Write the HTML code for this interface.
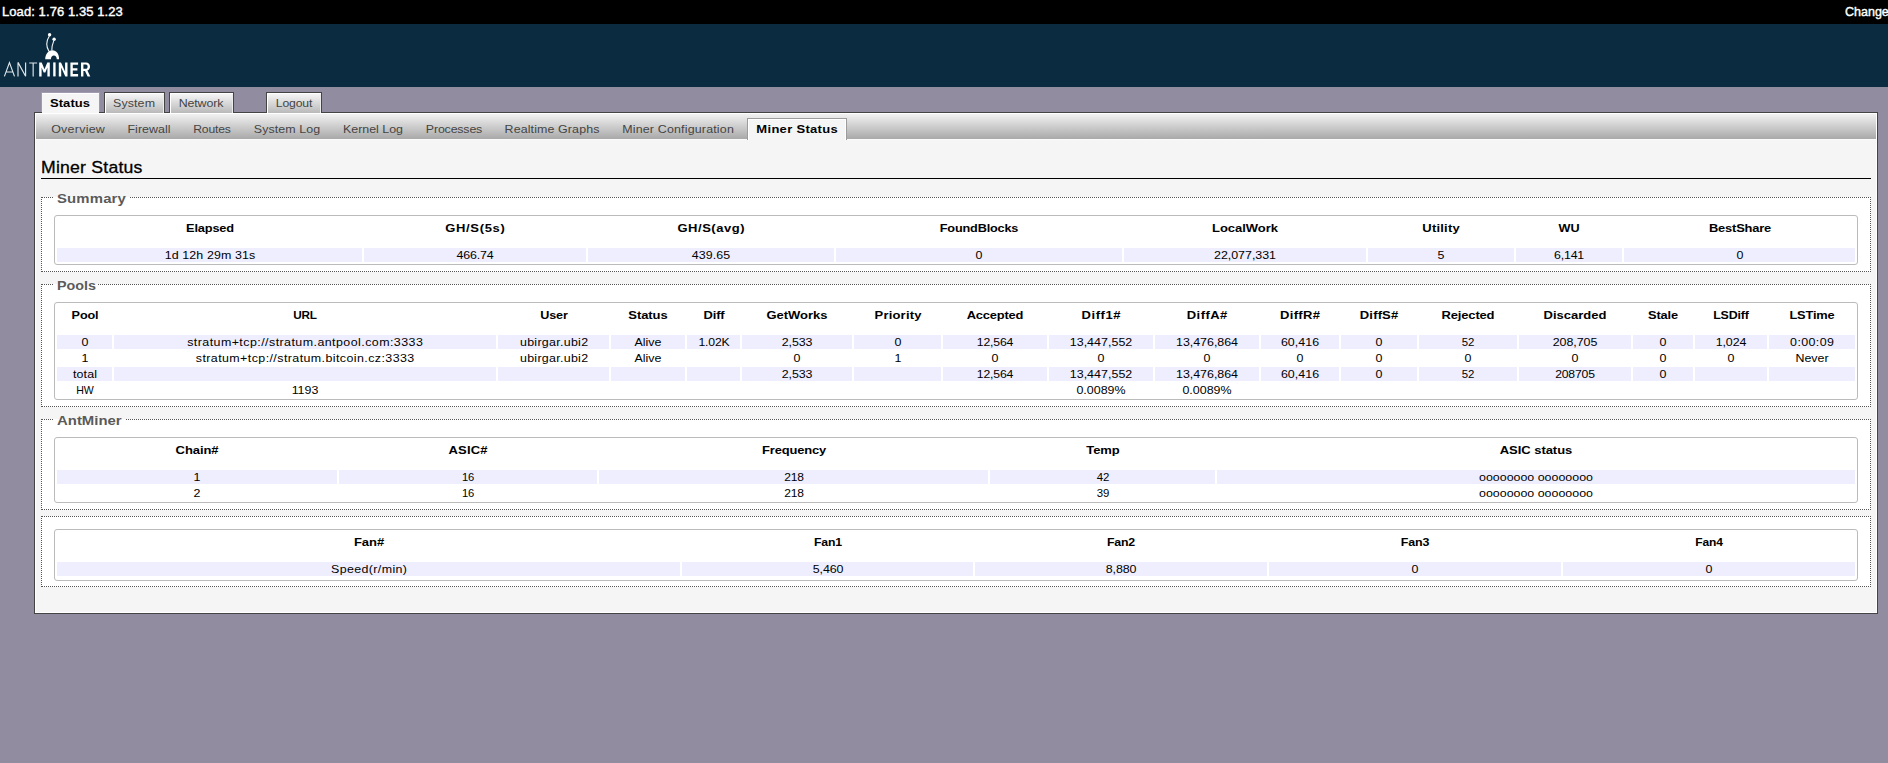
<!DOCTYPE html>
<html><head><meta charset="utf-8"><title>AntMiner - Miner Status</title>
<style>
html,body{margin:0;padding:0;}
body{width:1888px;height:763px;overflow:hidden;position:relative;background:#918ca0;
 font-family:"Liberation Sans",sans-serif;font-size:11.5px;color:#000;}
div{position:absolute;box-sizing:border-box;}
#bar{left:0;top:0;width:1888px;height:24px;background:#000;}
#hdr{left:0;top:24px;width:1888px;height:63px;background:#0a2b40;}
.t{z-index:3;white-space:nowrap;line-height:14px;height:14px;}
.r{letter-spacing:0.2px;}
.b{font-weight:bold;letter-spacing:0.25px;}
.load{color:#fff;font-weight:normal;-webkit-text-stroke:0.4px #fff;font-size:13px;line-height:18px;height:18px;letter-spacing:0.08px;overflow:hidden;}
.navtxt{color:#444;}
.tabtxtA{color:#000;}
.tabA{background:#f5f5f5;border:1px solid #a09bae;border-bottom:none;box-shadow:inset 0 1px 0 #fff;}
.tabI{background:linear-gradient(#f8f8f8,#b9b9b9);border:1px solid #444;border-bottom:none;box-shadow:inset 1px 1px 0 #fff, inset -1px 0 0 #ececec;z-index:2;}
#panel{left:34px;top:112px;width:1844px;height:502px;background:#f5f5f5;border:1px solid #444;box-shadow:inset 1px 0 0 #fff, inset 0 -1px 0 #fff, inset -1px 0 0 #fff;}
#tabAcover{left:42px;top:112px;width:57px;height:1px;background:#f5f5f5;}
#subnav{left:36px;top:113px;width:1840px;height:27px;background:linear-gradient(#fff 0,#fff 1px,#f1f1f1 1px,#a9a9a9 26px,#fbfbfb 26px,#fbfbfb 27px);}
.subA{background:#f5f5f5;border:1px solid #9c9c9c;border-bottom:none;box-shadow:inset 1px 1px 0 #fff, inset -1px 0 0 #fff;}
.h2{font-size:16.8px;line-height:22px;height:22px;letter-spacing:0.2px;color:#000;-webkit-text-stroke:0.3px #000;transform:scaleX(1.052);transform-origin:0 0;}
.fs{background:#fff;border:1px dotted #555;}
.lg{font-weight:bold;font-size:13.2px;line-height:15px;height:15px;color:#5a5a5a;}
.tb{border:1px solid #bbb;border-radius:3px;background:#fff;}
.c{background:#eeeeff;}
</style></head>
<body>
<div id="bar"></div><div id="hdr"></div>
<div class="t load" style="left:2px;top:3px;">Load: 1.76 1.35 1.23</div>
<div class="t load" style="left:1845px;top:3px;width:80px;white-space:nowrap;transform:scaleX(0.962);transform-origin:0 0;letter-spacing:0;">Changes: 0</div>
<svg id="logo" width="100" height="63" viewBox="0 24 100 63" style="position:absolute;left:0;top:24px">
<g fill="none" stroke="#dfe6ea" stroke-width="1.15" stroke-linecap="butt" stroke-linejoin="miter">
<path d="M4.4,76.4 L9.45,62.6 L14.5,76.4 M6.3,72 H12.6"/>
<path d="M18,76.4 V62.4 L25.6,76.2 V62.4"/>
<path d="M29.2,63 H37.1 M33.15,63 V76.4"/>
</g>
<g fill="#ffffff" stroke="none">
<path d="M39.2,76.4 V62.4 H41.7 L44.5,69.3 L47.3,62.4 H49.8 V76.4 H47.4 V67.6 L45.35,72.6 H43.65 L41.6,67.6 V76.4 Z"/>
<path d="M53.2,62.4 H55.6 V76.4 H53.2 Z"/>
<path d="M58.8,76.4 V62.4 H61 L65.1,71.4 V62.4 H67.5 V76.4 H65.3 L61.2,67.4 V76.4 Z"/>
<path d="M70.4,62.4 H78.1 V64.7 H72.8 V68.2 H77.4 V70.5 H72.8 V74.1 H78.1 V76.4 H70.4 Z"/>
<path fill-rule="evenodd" d="M81,62.4 H86 C88.6,62.4 90,64.2 90,66.6 C90,68.7 89,70.1 87.4,70.6 L90.3,76.4 H87.6 L85,71 H83.4 V76.4 H81 Z M83.4,64.6 V68.8 H85.8 C87,68.8 87.6,67.9 87.6,66.7 C87.6,65.5 87,64.6 85.8,64.6 Z"/>
</g>
<g fill="#ffffff" stroke="none">
<circle cx="49.6" cy="34.7" r="1.7"/><circle cx="54.1" cy="39.3" r="1.7"/>
<path d="M45.2,59.2 C45.4,53.6 48.6,50.2 52.4,50.2 C56.4,50.2 59.1,53.8 59.1,59.2 L56.8,59.2 C56.8,57 55.5,55.4 53.85,55.4 C52.2,55.4 50.9,57 50.9,59.2 Z"/>
</g>
<g fill="none" stroke="#f3f6f7" stroke-width="1.1">
<path d="M49.3,36 C46.2,41 46.4,47 48.9,51.3"/>
<path d="M53.8,40.6 C52.4,44 51.8,47 51.8,50.6"/>
</g>
</svg>
<div class="tabA" style="left:41px;top:92px;width:59px;height:21px;"></div>
<div class="t b tabtxtA" style="top:96px;letter-spacing:0.080px;transform:scaleX(1.1300);left:-79.75px;width:300px;text-align:center;padding-left:0.080px;">Status</div>
<div class="tabI" style="left:104px;top:92px;width:61px;height:21px;"></div>
<div class="t r navtxt" style="top:96px;letter-spacing:0.104px;transform:scaleX(1.0800);left:-15.8px;width:300px;text-align:center;padding-left:0.104px;">System</div>
<div class="tabI" style="left:169px;top:92px;width:65px;height:21px;"></div>
<div class="t r navtxt" style="top:96px;letter-spacing:-0.145px;transform:scaleX(1.0800);left:51.25px;width:300px;text-align:center;padding-left:-0.145px;">Network</div>
<div class="tabI" style="left:266px;top:92px;width:56px;height:21px;"></div>
<div class="t r navtxt" style="top:96px;letter-spacing:-0.150px;transform:scaleX(1.0610);left:144.3px;width:300px;text-align:center;padding-left:-0.150px;">Logout</div>
<div id="panel"></div>
<div id="tabAcover"></div>
<div id="subnav"></div>
<div class="t r navtxt" style="top:122px;letter-spacing:0.253px;transform:scaleX(1.0800);left:-72.125px;width:300px;text-align:center;padding-left:0.253px;">Overview</div>
<div class="t r navtxt" style="top:122px;letter-spacing:0.040px;transform:scaleX(1.0800);left:-1px;width:300px;text-align:center;padding-left:0.040px;">Firewall</div>
<div class="t r navtxt" style="top:122px;letter-spacing:-0.150px;transform:scaleX(1.0552);left:62.375px;width:300px;text-align:center;padding-left:-0.150px;">Routes</div>
<div class="t r navtxt" style="top:122px;letter-spacing:0.090px;transform:scaleX(1.0800);left:137.375px;width:300px;text-align:center;padding-left:0.090px;">System Log</div>
<div class="t r navtxt" style="top:122px;letter-spacing:-0.024px;transform:scaleX(1.0800);left:223.375px;width:300px;text-align:center;padding-left:-0.024px;">Kernel Log</div>
<div class="t r navtxt" style="top:122px;letter-spacing:-0.150px;transform:scaleX(1.0748);left:304.375px;width:300px;text-align:center;padding-left:-0.150px;">Processes</div>
<div class="t r navtxt" style="top:122px;letter-spacing:0.107px;transform:scaleX(1.0800);left:402.25px;width:300px;text-align:center;padding-left:0.107px;">Realtime Graphs</div>
<div class="t r navtxt" style="top:122px;letter-spacing:0.167px;transform:scaleX(1.0800);left:528.125px;width:300px;text-align:center;padding-left:0.167px;">Miner Configuration</div>
<div class="subA" style="left:747px;top:118px;width:100px;height:22px;"></div>
<div class="t b tabtxtA" style="top:122px;letter-spacing:0.264px;transform:scaleX(1.1300);left:646.875px;width:300px;text-align:center;padding-left:0.264px;">Miner Status</div>
<div class="t h2" style="left:41px;top:156.5px;">Miner Status</div>
<div class="" style="left:41px;top:178px;width:1830px;height:1px;background:#000;"></div>
<div class="fs" style="left:41px;top:197px;width:1830px;height:75px;"></div>
<div class="" style="left:54px;top:197px;width:75px;height:1px;background:#fff;"></div>
<div class="" style="left:54px;top:194px;width:75px;height:3px;background:#f5f5f5;"></div>
<div class="t lg" style="left:57px;top:191px;letter-spacing:0.14px;transform:scaleX(1.13);transform-origin:0 0;">Summary</div>
<div class="tb" style="left:54px;top:215px;width:1804px;height:50px;"></div>
<div class="t b" style="top:221px;letter-spacing:-0.150px;transform:scaleX(1.1137);left:59.5px;width:300px;text-align:center;padding-left:-0.150px;">Elapsed</div>
<div class="t b" style="top:221px;letter-spacing:0.585px;transform:scaleX(1.1300);left:325px;width:300px;text-align:center;padding-left:0.585px;">GH/S(5s)</div>
<div class="t b" style="top:221px;letter-spacing:0.467px;transform:scaleX(1.1300);left:561px;width:300px;text-align:center;padding-left:0.467px;">GH/S(avg)</div>
<div class="t b" style="top:221px;letter-spacing:-0.150px;transform:scaleX(1.1014);left:829px;width:300px;text-align:center;padding-left:-0.150px;">FoundBlocks</div>
<div class="t b" style="top:221px;letter-spacing:-0.019px;transform:scaleX(1.1300);left:1095px;width:300px;text-align:center;padding-left:-0.019px;">LocalWork</div>
<div class="t b" style="top:221px;letter-spacing:0.198px;transform:scaleX(1.1300);left:1291px;width:300px;text-align:center;padding-left:0.198px;">Utility</div>
<div class="t b" style="top:221px;letter-spacing:-0.150px;transform:scaleX(1.1008);left:1419px;width:300px;text-align:center;padding-left:-0.150px;">WU</div>
<div class="t b" style="top:221px;letter-spacing:-0.150px;transform:scaleX(1.1201);left:1589.5px;width:300px;text-align:center;padding-left:-0.150px;">BestShare</div>
<div class="c" style="left:57px;top:248px;width:305px;height:14px;"></div>
<div class="t r" style="top:248px;letter-spacing:0.115px;transform:scaleX(1.0800);left:59.5px;width:300px;text-align:center;padding-left:0.115px;">1d 12h 29m 31s</div>
<div class="c" style="left:364px;top:248px;width:222px;height:14px;"></div>
<div class="t r" style="top:248px;letter-spacing:-0.150px;transform:scaleX(1.0780);left:325px;width:300px;text-align:center;padding-left:-0.150px;">466.74</div>
<div class="c" style="left:588px;top:248px;width:246px;height:14px;"></div>
<div class="t r" style="top:248px;letter-spacing:0.083px;transform:scaleX(1.0800);left:561px;width:300px;text-align:center;padding-left:0.083px;">439.65</div>
<div class="c" style="left:836px;top:248px;width:286px;height:14px;"></div>
<div class="t r" style="top:248px;letter-spacing:0.200px;transform:scaleX(1.0800);left:829px;width:300px;text-align:center;padding-left:0.200px;">0</div>
<div class="c" style="left:1124px;top:248px;width:242px;height:14px;"></div>
<div class="t r" style="top:248px;letter-spacing:-0.014px;transform:scaleX(1.0800);left:1095px;width:300px;text-align:center;padding-left:-0.014px;">22,077,331</div>
<div class="c" style="left:1368px;top:248px;width:146px;height:14px;"></div>
<div class="t r" style="top:248px;letter-spacing:0.200px;transform:scaleX(1.0800);left:1291px;width:300px;text-align:center;padding-left:0.200px;">5</div>
<div class="c" style="left:1516px;top:248px;width:106px;height:14px;"></div>
<div class="t r" style="top:248px;letter-spacing:-0.150px;transform:scaleX(1.0739);left:1419px;width:300px;text-align:center;padding-left:-0.150px;">6,141</div>
<div class="c" style="left:1624px;top:248px;width:231px;height:14px;"></div>
<div class="t r" style="top:248px;letter-spacing:0.200px;transform:scaleX(1.0800);left:1589.5px;width:300px;text-align:center;padding-left:0.200px;">0</div>
<div class="fs" style="left:41px;top:284px;width:1830px;height:123px;"></div>
<div class="" style="left:54px;top:284px;width:44px;height:1px;background:#fff;"></div>
<div class="" style="left:54px;top:281px;width:44px;height:3px;background:#f5f5f5;"></div>
<div class="t lg" style="left:57px;top:278px;letter-spacing:0px;transform:scaleX(1.086);transform-origin:0 0;">Pools</div>
<div class="tb" style="left:54px;top:302px;width:1804px;height:98px;"></div>
<div class="t b" style="top:308px;letter-spacing:-0.150px;transform:scaleX(1.0998);left:-65.5px;width:300px;text-align:center;padding-left:-0.150px;">Pool</div>
<div class="t b" style="top:308px;letter-spacing:-0.150px;transform:scaleX(1.0232);left:155px;width:300px;text-align:center;padding-left:-0.150px;">URL</div>
<div class="t b" style="top:308px;letter-spacing:-0.150px;transform:scaleX(1.0959);left:403.5px;width:300px;text-align:center;padding-left:-0.150px;">User</div>
<div class="t b" style="top:308px;letter-spacing:-0.053px;transform:scaleX(1.1300);left:498px;width:300px;text-align:center;padding-left:-0.053px;">Status</div>
<div class="t b" style="top:308px;letter-spacing:-0.150px;transform:scaleX(1.1253);left:563.5px;width:300px;text-align:center;padding-left:-0.150px;">Diff</div>
<div class="t b" style="top:308px;letter-spacing:-0.003px;transform:scaleX(1.1300);left:647px;width:300px;text-align:center;padding-left:-0.003px;">GetWorks</div>
<div class="t b" style="top:308px;letter-spacing:0.180px;transform:scaleX(1.1300);left:747.5px;width:300px;text-align:center;padding-left:0.180px;">Priority</div>
<div class="t b" style="top:308px;letter-spacing:-0.150px;transform:scaleX(1.1187);left:845px;width:300px;text-align:center;padding-left:-0.150px;">Accepted</div>
<div class="t b" style="top:308px;letter-spacing:0.547px;transform:scaleX(1.1300);left:951px;width:300px;text-align:center;padding-left:0.547px;">Diff1#</div>
<div class="t b" style="top:308px;letter-spacing:0.368px;transform:scaleX(1.1300);left:1057px;width:300px;text-align:center;padding-left:0.368px;">DiffA#</div>
<div class="t b" style="top:308px;letter-spacing:0.280px;transform:scaleX(1.1300);left:1150px;width:300px;text-align:center;padding-left:0.280px;">DiffR#</div>
<div class="t b" style="top:308px;letter-spacing:0.147px;transform:scaleX(1.1300);left:1229px;width:300px;text-align:center;padding-left:0.147px;">DiffS#</div>
<div class="t b" style="top:308px;letter-spacing:-0.150px;transform:scaleX(1.1289);left:1318px;width:300px;text-align:center;padding-left:-0.150px;">Rejected</div>
<div class="t b" style="top:308px;letter-spacing:0.011px;transform:scaleX(1.1300);left:1425px;width:300px;text-align:center;padding-left:0.011px;">Discarded</div>
<div class="t b" style="top:308px;letter-spacing:-0.150px;transform:scaleX(1.1131);left:1513px;width:300px;text-align:center;padding-left:-0.150px;">Stale</div>
<div class="t b" style="top:308px;letter-spacing:-0.150px;transform:scaleX(1.0803);left:1581px;width:300px;text-align:center;padding-left:-0.150px;">LSDiff</div>
<div class="t b" style="top:308px;letter-spacing:-0.150px;transform:scaleX(1.1152);left:1662px;width:300px;text-align:center;padding-left:-0.150px;">LSTime</div>
<div class="c" style="left:57px;top:335px;width:55px;height:14px;"></div>
<div class="t r" style="top:335px;letter-spacing:0.200px;transform:scaleX(1.0800);left:-65.5px;width:300px;text-align:center;padding-left:0.200px;">0</div>
<div class="c" style="left:114px;top:335px;width:382px;height:14px;"></div>
<div class="t r" style="top:335px;letter-spacing:0.413px;transform:scaleX(1.0800);left:155px;width:300px;text-align:center;padding-left:0.413px;">stratum+tcp://stratum.antpool.com:3333</div>
<div class="c" style="left:498px;top:335px;width:111px;height:14px;"></div>
<div class="t r" style="top:335px;letter-spacing:0.269px;transform:scaleX(1.0800);left:403.5px;width:300px;text-align:center;padding-left:0.269px;">ubirgar.ubi2</div>
<div class="c" style="left:611px;top:335px;width:74px;height:14px;"></div>
<div class="t r" style="top:335px;letter-spacing:0.000px;transform:scaleX(1.0800);left:498px;width:300px;text-align:center;padding-left:0.000px;">Alive</div>
<div class="c" style="left:687px;top:335px;width:53px;height:14px;"></div>
<div class="t r" style="top:335px;letter-spacing:-0.150px;transform:scaleX(1.0629);left:563.5px;width:300px;text-align:center;padding-left:-0.150px;">1.02K</div>
<div class="c" style="left:742px;top:335px;width:110px;height:14px;"></div>
<div class="t r" style="top:335px;letter-spacing:-0.132px;transform:scaleX(1.0800);left:647px;width:300px;text-align:center;padding-left:-0.132px;">2,533</div>
<div class="c" style="left:854px;top:335px;width:87px;height:14px;"></div>
<div class="t r" style="top:335px;letter-spacing:0.200px;transform:scaleX(1.0800);left:747.5px;width:300px;text-align:center;padding-left:0.200px;">0</div>
<div class="c" style="left:943px;top:335px;width:104px;height:14px;"></div>
<div class="t r" style="top:335px;letter-spacing:-0.150px;transform:scaleX(1.0638);left:845px;width:300px;text-align:center;padding-left:-0.150px;">12,564</div>
<div class="c" style="left:1049px;top:335px;width:104px;height:14px;"></div>
<div class="t r" style="top:335px;letter-spacing:0.037px;transform:scaleX(1.0800);left:951px;width:300px;text-align:center;padding-left:0.037px;">13,447,552</div>
<div class="c" style="left:1155px;top:335px;width:104px;height:14px;"></div>
<div class="t r" style="top:335px;letter-spacing:-0.014px;transform:scaleX(1.0800);left:1057px;width:300px;text-align:center;padding-left:-0.014px;">13,476,864</div>
<div class="c" style="left:1261px;top:335px;width:78px;height:14px;"></div>
<div class="t r" style="top:335px;letter-spacing:0.037px;transform:scaleX(1.0800);left:1150px;width:300px;text-align:center;padding-left:0.037px;">60,416</div>
<div class="c" style="left:1341px;top:335px;width:76px;height:14px;"></div>
<div class="t r" style="top:335px;letter-spacing:0.200px;transform:scaleX(1.0800);left:1229px;width:300px;text-align:center;padding-left:0.200px;">0</div>
<div class="c" style="left:1419px;top:335px;width:98px;height:14px;"></div>
<div class="t r" style="top:335px;letter-spacing:-0.150px;transform:scaleX(0.9922);left:1318px;width:300px;text-align:center;padding-left:-0.150px;">52</div>
<div class="c" style="left:1519px;top:335px;width:112px;height:14px;"></div>
<div class="t r" style="top:335px;letter-spacing:-0.056px;transform:scaleX(1.0800);left:1425px;width:300px;text-align:center;padding-left:-0.056px;">208,705</div>
<div class="c" style="left:1633px;top:335px;width:60px;height:14px;"></div>
<div class="t r" style="top:335px;letter-spacing:0.200px;transform:scaleX(1.0800);left:1513px;width:300px;text-align:center;padding-left:0.200px;">0</div>
<div class="c" style="left:1695px;top:335px;width:72px;height:14px;"></div>
<div class="t r" style="top:335px;letter-spacing:-0.074px;transform:scaleX(1.0800);left:1581px;width:300px;text-align:center;padding-left:-0.074px;">1,024</div>
<div class="c" style="left:1769px;top:335px;width:86px;height:14px;"></div>
<div class="t r" style="top:335px;letter-spacing:0.367px;transform:scaleX(1.0800);left:1662px;width:300px;text-align:center;padding-left:0.367px;">0:00:09</div>
<div class="t r" style="top:351px;letter-spacing:0.200px;transform:scaleX(1.0800);left:-65.5px;width:300px;text-align:center;padding-left:0.200px;">1</div>
<div class="t r" style="top:351px;letter-spacing:0.391px;transform:scaleX(1.0800);left:155px;width:300px;text-align:center;padding-left:0.391px;">stratum+tcp://stratum.bitcoin.cz:3333</div>
<div class="t r" style="top:351px;letter-spacing:0.269px;transform:scaleX(1.0800);left:403.5px;width:300px;text-align:center;padding-left:0.269px;">ubirgar.ubi2</div>
<div class="t r" style="top:351px;letter-spacing:0.000px;transform:scaleX(1.0800);left:498px;width:300px;text-align:center;padding-left:0.000px;">Alive</div>
<div class="t r" style="top:351px;letter-spacing:0.200px;transform:scaleX(1.0800);left:647px;width:300px;text-align:center;padding-left:0.200px;">0</div>
<div class="t r" style="top:351px;letter-spacing:0.200px;transform:scaleX(1.0800);left:747.5px;width:300px;text-align:center;padding-left:0.200px;">1</div>
<div class="t r" style="top:351px;letter-spacing:0.200px;transform:scaleX(1.0800);left:845px;width:300px;text-align:center;padding-left:0.200px;">0</div>
<div class="t r" style="top:351px;letter-spacing:0.200px;transform:scaleX(1.0800);left:951px;width:300px;text-align:center;padding-left:0.200px;">0</div>
<div class="t r" style="top:351px;letter-spacing:0.200px;transform:scaleX(1.0800);left:1057px;width:300px;text-align:center;padding-left:0.200px;">0</div>
<div class="t r" style="top:351px;letter-spacing:0.200px;transform:scaleX(1.0800);left:1150px;width:300px;text-align:center;padding-left:0.200px;">0</div>
<div class="t r" style="top:351px;letter-spacing:0.200px;transform:scaleX(1.0800);left:1229px;width:300px;text-align:center;padding-left:0.200px;">0</div>
<div class="t r" style="top:351px;letter-spacing:0.200px;transform:scaleX(1.0800);left:1318px;width:300px;text-align:center;padding-left:0.200px;">0</div>
<div class="t r" style="top:351px;letter-spacing:0.200px;transform:scaleX(1.0800);left:1425px;width:300px;text-align:center;padding-left:0.200px;">0</div>
<div class="t r" style="top:351px;letter-spacing:0.200px;transform:scaleX(1.0800);left:1513px;width:300px;text-align:center;padding-left:0.200px;">0</div>
<div class="t r" style="top:351px;letter-spacing:0.200px;transform:scaleX(1.0800);left:1581px;width:300px;text-align:center;padding-left:0.200px;">0</div>
<div class="t r" style="top:351px;letter-spacing:0.005px;transform:scaleX(1.0800);left:1662px;width:300px;text-align:center;padding-left:0.005px;">Never</div>
<div class="c" style="left:57px;top:367px;width:55px;height:14px;"></div>
<div class="t r" style="top:367px;letter-spacing:0.171px;transform:scaleX(1.0800);left:-65.5px;width:300px;text-align:center;padding-left:0.171px;">total</div>
<div class="c" style="left:114px;top:367px;width:382px;height:14px;"></div>
<div class="c" style="left:498px;top:367px;width:111px;height:14px;"></div>
<div class="c" style="left:611px;top:367px;width:74px;height:14px;"></div>
<div class="c" style="left:687px;top:367px;width:53px;height:14px;"></div>
<div class="c" style="left:742px;top:367px;width:110px;height:14px;"></div>
<div class="t r" style="top:367px;letter-spacing:-0.132px;transform:scaleX(1.0800);left:647px;width:300px;text-align:center;padding-left:-0.132px;">2,533</div>
<div class="c" style="left:854px;top:367px;width:87px;height:14px;"></div>
<div class="c" style="left:943px;top:367px;width:104px;height:14px;"></div>
<div class="t r" style="top:367px;letter-spacing:-0.150px;transform:scaleX(1.0638);left:845px;width:300px;text-align:center;padding-left:-0.150px;">12,564</div>
<div class="c" style="left:1049px;top:367px;width:104px;height:14px;"></div>
<div class="t r" style="top:367px;letter-spacing:0.037px;transform:scaleX(1.0800);left:951px;width:300px;text-align:center;padding-left:0.037px;">13,447,552</div>
<div class="c" style="left:1155px;top:367px;width:104px;height:14px;"></div>
<div class="t r" style="top:367px;letter-spacing:-0.014px;transform:scaleX(1.0800);left:1057px;width:300px;text-align:center;padding-left:-0.014px;">13,476,864</div>
<div class="c" style="left:1261px;top:367px;width:78px;height:14px;"></div>
<div class="t r" style="top:367px;letter-spacing:0.037px;transform:scaleX(1.0800);left:1150px;width:300px;text-align:center;padding-left:0.037px;">60,416</div>
<div class="c" style="left:1341px;top:367px;width:76px;height:14px;"></div>
<div class="t r" style="top:367px;letter-spacing:0.200px;transform:scaleX(1.0800);left:1229px;width:300px;text-align:center;padding-left:0.200px;">0</div>
<div class="c" style="left:1419px;top:367px;width:98px;height:14px;"></div>
<div class="t r" style="top:367px;letter-spacing:-0.150px;transform:scaleX(0.9922);left:1318px;width:300px;text-align:center;padding-left:-0.150px;">52</div>
<div class="c" style="left:1519px;top:367px;width:112px;height:14px;"></div>
<div class="t r" style="top:367px;letter-spacing:-0.150px;transform:scaleX(1.0588);left:1425px;width:300px;text-align:center;padding-left:-0.150px;">208705</div>
<div class="c" style="left:1633px;top:367px;width:60px;height:14px;"></div>
<div class="t r" style="top:367px;letter-spacing:0.200px;transform:scaleX(1.0800);left:1513px;width:300px;text-align:center;padding-left:0.200px;">0</div>
<div class="c" style="left:1695px;top:367px;width:72px;height:14px;"></div>
<div class="c" style="left:1769px;top:367px;width:86px;height:14px;"></div>
<div class="t r" style="top:383px;letter-spacing:-0.150px;transform:scaleX(0.9194);left:-65.5px;width:300px;text-align:center;padding-left:-0.150px;">HW</div>
<div class="t r" style="top:383px;letter-spacing:0.000px;transform:scaleX(1.0800);left:155px;width:300px;text-align:center;padding-left:0.000px;">1193</div>
<div class="t r" style="top:383px;letter-spacing:0.011px;transform:scaleX(1.0800);left:951px;width:300px;text-align:center;padding-left:0.011px;">0.0089%</div>
<div class="t r" style="top:383px;letter-spacing:0.011px;transform:scaleX(1.0800);left:1057px;width:300px;text-align:center;padding-left:0.011px;">0.0089%</div>
<div class="fs" style="left:41px;top:419px;width:1830px;height:91px;"></div>
<div class="" style="left:54px;top:419px;width:71px;height:1px;background:#fff;"></div>
<div class="" style="left:54px;top:416px;width:71px;height:3px;background:#f5f5f5;"></div>
<div class="t lg" style="left:57px;top:413px;letter-spacing:0.01px;transform:scaleX(1.13);transform-origin:0 0;">AntMiner</div>
<div class="tb" style="left:54px;top:437px;width:1804px;height:66px;"></div>
<div class="t b" style="top:443px;letter-spacing:-0.083px;transform:scaleX(1.1300);left:47px;width:300px;text-align:center;padding-left:-0.083px;">Chain#</div>
<div class="t b" style="top:443px;letter-spacing:0.184px;transform:scaleX(1.1300);left:318px;width:300px;text-align:center;padding-left:0.184px;">ASIC#</div>
<div class="t b" style="top:443px;letter-spacing:-0.150px;transform:scaleX(1.1246);left:643.5px;width:300px;text-align:center;padding-left:-0.150px;">Frequency</div>
<div class="t b" style="top:443px;letter-spacing:-0.044px;transform:scaleX(1.1300);left:952.5px;width:300px;text-align:center;padding-left:-0.044px;">Temp</div>
<div class="t b" style="top:443px;letter-spacing:-0.040px;transform:scaleX(1.1300);left:1386px;width:300px;text-align:center;padding-left:-0.040px;">ASIC status</div>
<div class="c" style="left:57px;top:470px;width:280px;height:14px;"></div>
<div class="t r" style="top:470px;letter-spacing:0.200px;transform:scaleX(1.0800);left:47px;width:300px;text-align:center;padding-left:0.200px;">1</div>
<div class="c" style="left:339px;top:470px;width:258px;height:14px;"></div>
<div class="t r" style="top:470px;letter-spacing:-0.150px;transform:scaleX(0.9728);left:318px;width:300px;text-align:center;padding-left:-0.150px;">16</div>
<div class="c" style="left:599px;top:470px;width:389px;height:14px;"></div>
<div class="t r" style="top:470px;letter-spacing:-0.150px;transform:scaleX(1.0428);left:643.5px;width:300px;text-align:center;padding-left:-0.150px;">218</div>
<div class="c" style="left:990px;top:470px;width:225px;height:14px;"></div>
<div class="t r" style="top:470px;letter-spacing:-0.150px;transform:scaleX(0.9922);left:952.5px;width:300px;text-align:center;padding-left:-0.150px;">42</div>
<div class="c" style="left:1217px;top:470px;width:638px;height:14px;"></div>
<div class="t r" style="top:470px;letter-spacing:0.001px;transform:scaleX(1.0800);left:1386px;width:300px;text-align:center;padding-left:0.001px;">oooooooo oooooooo</div>
<div class="t r" style="top:486px;letter-spacing:0.200px;transform:scaleX(1.0800);left:47px;width:300px;text-align:center;padding-left:0.200px;">2</div>
<div class="t r" style="top:486px;letter-spacing:-0.150px;transform:scaleX(0.9728);left:318px;width:300px;text-align:center;padding-left:-0.150px;">16</div>
<div class="t r" style="top:486px;letter-spacing:-0.150px;transform:scaleX(1.0428);left:643.5px;width:300px;text-align:center;padding-left:-0.150px;">218</div>
<div class="t r" style="top:486px;letter-spacing:-0.150px;transform:scaleX(0.9922);left:952.5px;width:300px;text-align:center;padding-left:-0.150px;">39</div>
<div class="t r" style="top:486px;letter-spacing:0.001px;transform:scaleX(1.0800);left:1386px;width:300px;text-align:center;padding-left:0.001px;">oooooooo oooooooo</div>
<div class="fs" style="left:41px;top:516px;width:1830px;height:71px;"></div>
<div class="tb" style="left:54px;top:529px;width:1804px;height:52px;"></div>
<div class="t b" style="top:535px;letter-spacing:-0.032px;transform:scaleX(1.1300);left:218.5px;width:300px;text-align:center;padding-left:-0.032px;">Fan#</div>
<div class="t b" style="top:535px;letter-spacing:-0.150px;transform:scaleX(1.0640);left:677.5px;width:300px;text-align:center;padding-left:-0.150px;">Fan1</div>
<div class="t b" style="top:535px;letter-spacing:-0.150px;transform:scaleX(1.0734);left:971px;width:300px;text-align:center;padding-left:-0.150px;">Fan2</div>
<div class="t b" style="top:535px;letter-spacing:-0.150px;transform:scaleX(1.0829);left:1265px;width:300px;text-align:center;padding-left:-0.150px;">Fan3</div>
<div class="t b" style="top:535px;letter-spacing:-0.150px;transform:scaleX(1.0436);left:1559px;width:300px;text-align:center;padding-left:-0.150px;">Fan4</div>
<div class="c" style="left:57px;top:562px;width:623px;height:14px;"></div>
<div class="t r" style="top:562px;letter-spacing:0.357px;transform:scaleX(1.0800);left:218.5px;width:300px;text-align:center;padding-left:0.357px;">Speed(r/min)</div>
<div class="c" style="left:682px;top:562px;width:291px;height:14px;"></div>
<div class="t r" style="top:562px;letter-spacing:-0.132px;transform:scaleX(1.0800);left:677.5px;width:300px;text-align:center;padding-left:-0.132px;">5,460</div>
<div class="c" style="left:975px;top:562px;width:292px;height:14px;"></div>
<div class="t r" style="top:562px;letter-spacing:-0.132px;transform:scaleX(1.0800);left:971px;width:300px;text-align:center;padding-left:-0.132px;">8,880</div>
<div class="c" style="left:1269px;top:562px;width:292px;height:14px;"></div>
<div class="t r" style="top:562px;letter-spacing:0.200px;transform:scaleX(1.0800);left:1265px;width:300px;text-align:center;padding-left:0.200px;">0</div>
<div class="c" style="left:1563px;top:562px;width:292px;height:14px;"></div>
<div class="t r" style="top:562px;letter-spacing:0.200px;transform:scaleX(1.0800);left:1559px;width:300px;text-align:center;padding-left:0.200px;">0</div>
</body></html>
